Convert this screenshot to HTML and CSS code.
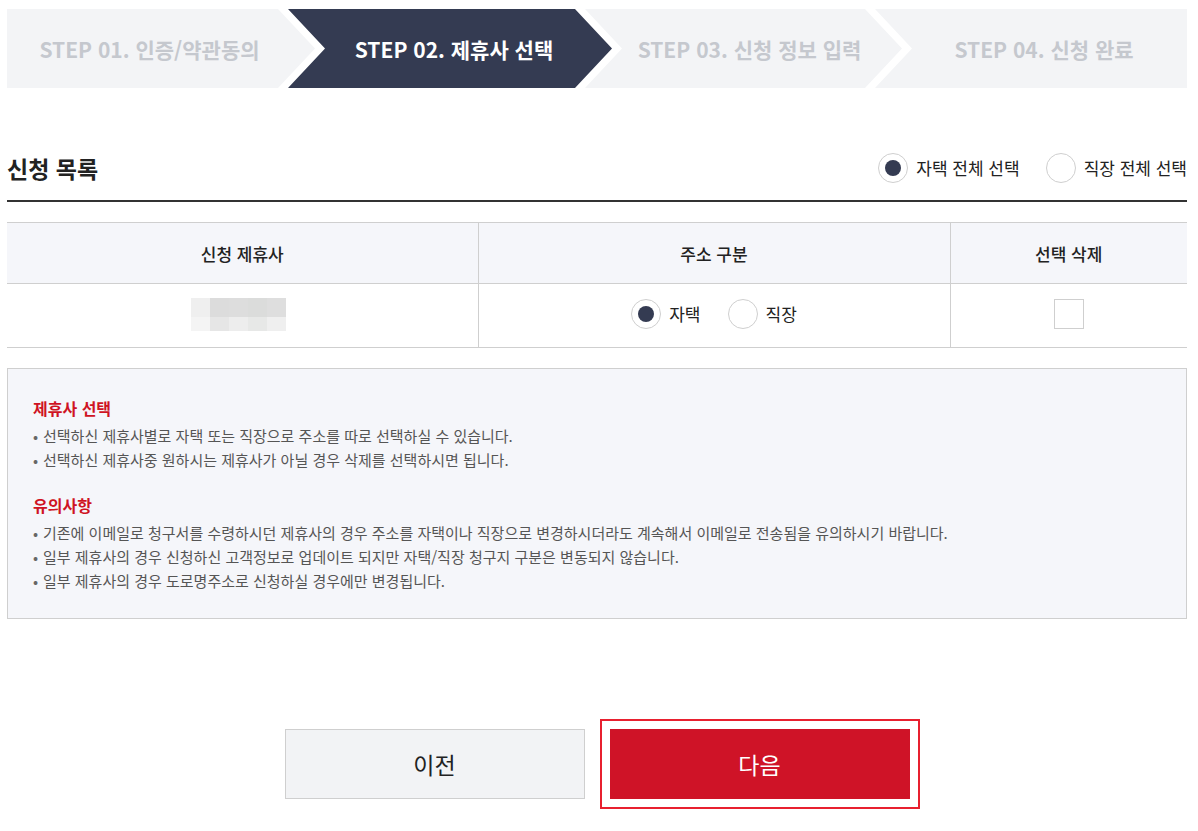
FILE: index.html
```html
<!DOCTYPE html>
<html lang="ko">
<head>
<meta charset="utf-8">
<title>제휴사 선택</title>
<link rel="stylesheet" href="styles.css">
</head>
<body>
<div class="page">
  <ol class="steps">
    <li class="step step1"><span>STEP 01. 인증/약관동의</span></li>
    <li class="step step2 active"><span>STEP 02. 제휴사 선택</span></li>
    <li class="step step3"><span>STEP 03. 신청 정보 입력</span></li>
    <li class="step step4"><span>STEP 04. 신청 완료</span></li>
  </ol>

  <div class="list-head">
    <h2 class="list-title">신청 목록</h2>
    <div class="radio-group all">
      <label class="radio"><span class="circle checked"></span><span class="label">자택 전체 선택</span></label>
      <label class="radio"><span class="circle"></span><span class="label">직장 전체 선택</span></label>
    </div>
  </div>

  <table class="list-table">
    <colgroup>
      <col class="c1"><col class="c2"><col class="c3">
    </colgroup>
    <thead>
      <tr><th>신청 제휴사</th><th>주소 구분</th><th>선택 삭제</th></tr>
    </thead>
    <tbody>
      <tr>
        <td>
          <div class="mosaic">
            <i class="m m1"></i><i class="m m2"></i><i class="m m3"></i><i class="m m4"></i><i class="m m5"></i>
            <i class="m m6"></i><i class="m m7"></i><i class="m m8"></i><i class="m m9"></i><i class="m m10"></i>
          </div>
        </td>
        <td>
          <div class="radio-group row">
            <label class="radio"><span class="circle checked"></span><span class="label">자택</span></label>
            <label class="radio"><span class="circle"></span><span class="label">직장</span></label>
          </div>
        </td>
        <td><span class="checkbox"></span></td>
      </tr>
    </tbody>
  </table>

  <div class="info">
    <div class="info-sec">
      <p class="info-title">제휴사 선택</p>
      <ul class="info-list">
        <li>선택하신 제휴사별로 자택 또는 직장으로 주소를 따로 선택하실 수 있습니다.</li>
        <li>선택하신 제휴사중 원하시는 제휴사가 아닐 경우 삭제를 선택하시면 됩니다.</li>
      </ul>
    </div>
    <div class="info-sec sec2">
      <p class="info-title">유의사항</p>
      <ul class="info-list">
        <li>기존에 이메일로 청구서를 수령하시던 제휴사의 경우 주소를 자택이나 직장으로 변경하시더라도 계속해서 이메일로 전송됨을 유의하시기 바랍니다.</li>
        <li>일부 제휴사의 경우 신청하신 고객정보로 업데이트 되지만 자택/직장 청구지 구분은 변동되지 않습니다.</li>
        <li>일부 제휴사의 경우 도로명주소로 신청하실 경우에만 변경됩니다.</li>
      </ul>
    </div>
  </div>

  <div class="buttons">
    <button class="btn prev" type="button">이전</button>
    <button class="btn next" type="button">다음</button>
  </div>
</div>
</body>
</html>
```

FILE: styles.css
```css
* { box-sizing: border-box; }
html, body { margin: 0; padding: 0; background: #fff; }
body {
  font-family: "Noto Sans CJK KR", "Noto Sans", sans-serif;
  color: #222;
}
.page {
  width: 1180px;
  margin-left: 7px;
  padding-bottom: 33px;
}

/* steps */
.steps {
  list-style: none;
  margin: 9px 0 0;
  padding: 0;
  display: flex;
  height: 79px;
}
.step {
  height: 79px;
  display: flex;
  align-items: center;
  justify-content: center;
  background: #f3f4f6;
  color: #c5c8ce;
  font-size: 21px;
  font-weight: 700;
  white-space: nowrap;
}
.step1 {
  width: 308px;
  padding-right: 23px;
  clip-path: polygon(0 0, calc(100% - 37px) 0, 100% 50%, calc(100% - 37px) 100%, 0 100%);
}
.step2 {
  width: 324px;
  margin-left: -27px;
  padding-left: 8px;
  clip-path: polygon(0 0, calc(100% - 37px) 0, 100% 50%, calc(100% - 37px) 100%, 0 100%, 37px 50%);
}
.step3 {
  width: 317px;
  margin-left: -27px;
  padding-left: 12px;
  clip-path: polygon(0 0, calc(100% - 37px) 0, 100% 50%, calc(100% - 37px) 100%, 0 100%, 37px 50%);
}
.step4 {
  flex: 1;
  margin-left: -27px;
  padding-left: 26px;
  clip-path: polygon(0 0, 100% 0, 100% 100%, 0 100%, 37px 50%);
}
.step.active {
  background: #343b52;
  color: #fff;
}

/* list head */
.list-head {
  margin-top: 64px;
  height: 50px;
  padding-bottom: 16px;
  border-bottom: 2px solid #333;
  display: flex;
  align-items: center;
  justify-content: space-between;
}
.list-title {
  margin: 0;
  font-size: 23px;
  font-weight: 700;
  color: #222;
  line-height: 32px;
}
.radio-group {
  display: flex;
  align-items: center;
}
.radio {
  display: flex;
  align-items: center;
  gap: 8px;
  font-size: 17px;
  color: #222;
  line-height: 24px;
}
.radio-group.all { gap: 26px; }
.radio-group.row { gap: 27px; justify-content: center; margin-bottom: 3px; }
.circle {
  width: 30px;
  height: 30px;
  border-radius: 50%;
  border: 1px solid #cfcfcf;
  background: #fff;
  display: flex;
  align-items: center;
  justify-content: center;
}
.circle.checked::after {
  content: "";
  width: 16px;
  height: 16px;
  border-radius: 50%;
  background: #343b52;
}

/* table */
.list-table {
  margin-top: 20px;
  width: 100%;
  border-collapse: collapse;
  table-layout: fixed;
  border-top: 1px solid #cfcfcf;
}
.c1 { width: 471px; }
.c2 { width: 472px; }
.c3 { width: 237px; }
.list-table th,
.list-table td {
  text-align: center;
  vertical-align: middle;
  border-bottom: 1px solid #cfcfcf;
  border-left: 1px solid #cfcfcf;
  padding: 0;
}
.list-table th:first-child,
.list-table td:first-child { border-left: 0; }
.list-table th {
  height: 61px;
  background: #f5f6fa;
  font-size: 17px;
  font-weight: 500;
  color: #222;
}
.list-table td { height: 64px; }

.mosaic {
  display: inline-grid;
  grid-template-columns: repeat(5, 19px);
  grid-template-rows: 19px 14px;
  vertical-align: middle;
  margin-right: 8px;
  margin-bottom: 3px;
}
.m { display: block; }
.m1 { background: #efefef; }
.m2 { background: #dcdcdc; }
.m3 { background: #dddddd; }
.m4 { background: #dbdcdb; }
.m5 { background: #dedede; }
.m6 { background: #f4f4f4; }
.m7 { background: #e6e6e6; }
.m8 { background: #ededed; }
.m9 { background: #e7e8e7; }
.m10 { background: #efefef; }

.checkbox {
  display: inline-block;
  width: 30px;
  height: 30px;
  border: 1px solid #cfcfcf;
  background: #fff;
  vertical-align: middle;
  margin-bottom: 4px;
}

/* info */
.info {
  margin-top: 20px;
  border: 1px solid #cfcfcf;
  background: #f5f6fa;
  padding: 27px 25px 25px;
}
.info-title {
  margin: 0;
  font-size: 16px;
  font-weight: 700;
  color: #cf1323;
  line-height: 24px;
}
.info-list {
  list-style: none;
  margin: 4px 0 0;
  padding: 0;
}
.info-list li {
  font-size: 15px;
  line-height: 24px;
  color: #555;
}
.info-list li::before {
  content: "•";
  display: inline-block;
  width: 10px;
  color: #666;
}
.sec2 { margin-top: 21px; }

/* buttons */
.buttons {
  margin-top: 110px;
  display: flex;
  justify-content: center;
  gap: 25px;
}
.btn {
  width: 300px;
  height: 70px;
  font-family: "Noto Sans CJK KR", "Noto Sans", sans-serif;
  font-size: 23px;
  font-weight: 400;
  cursor: pointer;
}
.btn.prev {
  background: #f2f3f5;
  border: 1px solid #cfcfcf;
  color: #222;
}
.btn.next {
  background: #cf1327;
  border: 0;
  color: #fff;
  outline: 2px solid #e8202f;
  outline-offset: 8px;
}
```
